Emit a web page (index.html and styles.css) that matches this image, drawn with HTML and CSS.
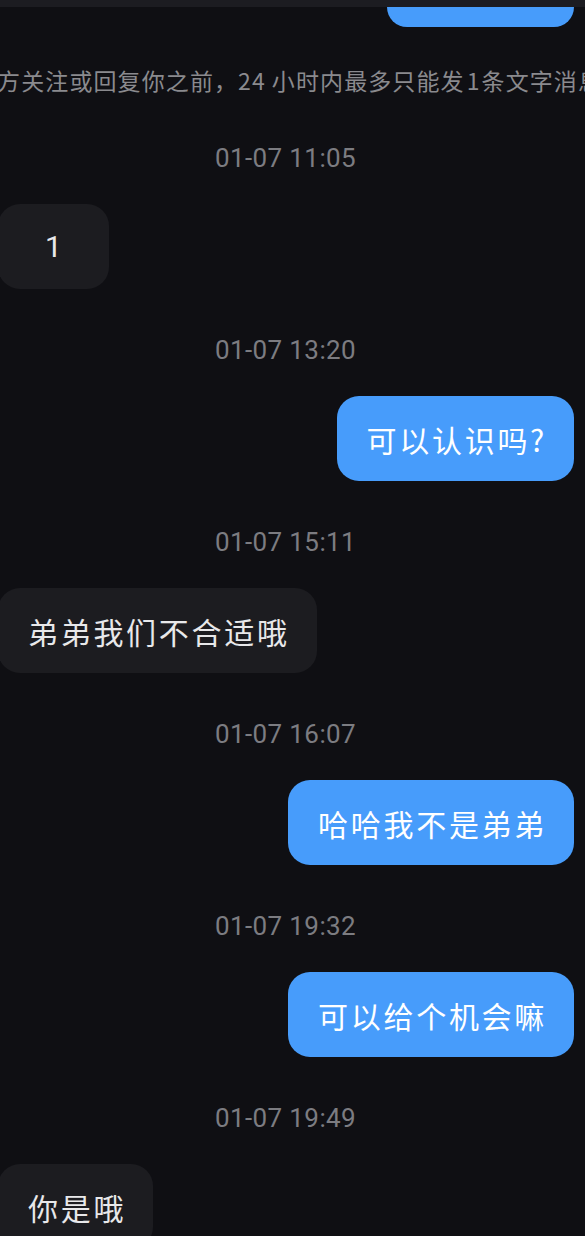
FILE: index.html
```html
<!DOCTYPE html>
<html lang="zh-CN">
<head>
<meta charset="utf-8">
<link rel="stylesheet" href="styles.css">
</head>
<body>
<div class="screen">
  <div class="topbar"></div>
  <div class="row right"><div class="bubble-tail"></div></div>
  <div class="notice"><span class="notice-text">对方关注或回复你之前，24<span class="gap"></span>小时内最多只能发<span class="num">1</span>条文字消息</span></div>

  <div class="time">01-07 11:05</div>
  <div class="row left"><div class="bubble in one">1</div></div>

  <div class="time">01-07 13:20</div>
  <div class="row right"><div class="bubble out">可以认识吗?</div></div>

  <div class="time">01-07 15:11</div>
  <div class="row left"><div class="bubble in">弟弟我们不合适哦</div></div>

  <div class="time">01-07 16:07</div>
  <div class="row right"><div class="bubble out">哈哈我不是弟弟</div></div>

  <div class="time">01-07 19:32</div>
  <div class="row right"><div class="bubble out">可以给个机会嘛</div></div>

  <div class="time">01-07 19:49</div>
  <div class="row left"><div class="bubble in">你是哦</div></div>
</div>
</body>
</html>
```

FILE: styles.css
```css
html, body {
  margin: 0;
  padding: 0;
  background: #0f0f13;
}
.screen {
  width: 585px;
  height: 1236px;
  overflow: hidden;
  background: #0f0f13;
  font-family: "Noto Sans CJK SC", "Noto Sans", sans-serif;
}
.topbar {
  height: 7px;
  background: #1c1c21;
}
.row {
  display: flex;
}
.row.right {
  justify-content: flex-end;
  padding-right: 11px;
}
.row.left {
  justify-content: flex-start;
  margin-left: -2px;
}
.bubble-tail {
  width: 187px;
  height: 20px;
  background: #479cfb;
  border-radius: 0 0 22px 22px;
}
.notice {
  margin-top: 38px;
  height: 30px;
  line-height: 30px;
  display: flex;
  overflow: hidden;
  white-space: nowrap;
}
.notice-text {
  margin-left: -27px;
  font-size: 23px;
  letter-spacing: 1.1px;
  color: #8a8a8e;
}
.gap {
  display: inline-block;
  width: 6px;
}
.num {
  margin: 0 1px 0 2px;
}
.time {
  margin-top: 43px;
  height: 36px;
  line-height: 36px;
  text-align: center;
  padding-right: 14px;
  font-family: "Roboto", "Noto Sans", sans-serif;
  font-size: 26px;
  letter-spacing: 0.4px;
  color: #7c7c81;
}
.notice + .time {
  margin-top: 45px;
}
.bubble {
  margin-top: 28px;
  height: 85px;
  box-sizing: border-box;
  padding: 0 27px 0 30px;
  display: flex;
  align-items: center;
  border-radius: 22px;
  font-size: 30px;
  letter-spacing: 2.7px;
  white-space: nowrap;
}
.bubble.in {
  background: #1c1c20;
  color: #e8e8ea;
}
.bubble.out {
  background: #479cfb;
  color: #ffffff;
}
.bubble.one {
  min-width: 111px;
  justify-content: center;
  padding: 0;
  font-family: "Roboto", sans-serif;
  letter-spacing: 0;
}
```
